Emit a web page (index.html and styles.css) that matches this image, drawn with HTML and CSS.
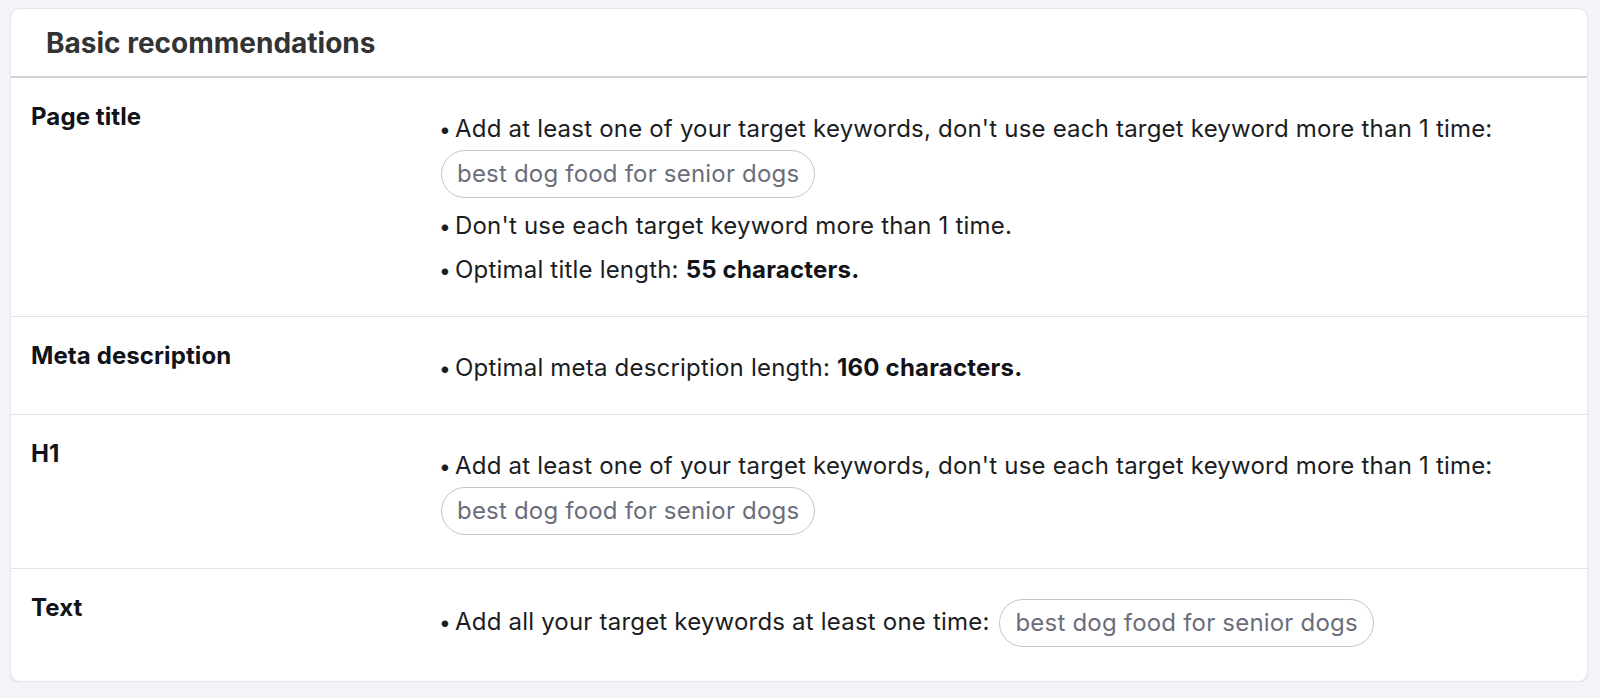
FILE: index.html
```html
<!DOCTYPE html>
<html lang="en">
<head>
  <meta charset="UTF-8">
  <meta name="viewport" content="width=device-width, initial-scale=1.0">
  <title>Basic recommendations</title>
  <link rel="stylesheet" href="styles.css">
</head>
<body>
  <section class="card">
    <h2 class="card-title">Basic recommendations</h2>

    <div class="rec-row">
      <div class="rec-label">Page title</div>
      <ul class="rec-list">
        <li>Add at least one of your target keywords, don't use each target keyword more than 1 time:
          <div class="keyword-list"><span class="keyword">best dog food for senior dogs</span></div>
        </li>
        <li>Don't use each target keyword more than 1 time.</li>
        <li>Optimal title length: <b>55 characters.</b></li>
      </ul>
    </div>

    <div class="rec-row">
      <div class="rec-label">Meta description</div>
      <ul class="rec-list">
        <li>Optimal meta description length: <b>160 characters.</b></li>
      </ul>
    </div>

    <div class="rec-row">
      <div class="rec-label">H1</div>
      <ul class="rec-list">
        <li>Add at least one of your target keywords, don't use each target keyword more than 1 time:
          <div class="keyword-list"><span class="keyword">best dog food for senior dogs</span></div>
        </li>
      </ul>
    </div>

    <div class="rec-row">
      <div class="rec-label">Text</div>
      <ul class="rec-list">
        <li>Add all your target keywords at least one time: <span class="keyword">best dog food for senior dogs</span></li>
      </ul>
    </div>
  </section>
</body>
</html>
```

FILE: styles.css
```css
body {
  margin: 8px 12px 0 10px;
  background-color: #f3f4f8;
  font-family: Inter, "Noto Sans", sans-serif;
  color: #1b1d22;
}

.card {
  background: #ffffff;
  border: 1px solid #e4e5ea;
  border-radius: 10px;
  box-shadow: 0 1px 2px rgba(20, 24, 40, 0.08);
  overflow: hidden;
}

.card-title {
  margin: 0;
  padding: 16px 35px 15px;
  font-size: 28px;
  line-height: 36px;
  font-weight: 700;
  color: #333333;
  border-bottom: 2px solid #cfd1d8;
}

.rec-row {
  display: grid;
  grid-template-columns: 408px 1fr;
  padding: 24px 20px 28px;
  border-top: 1px solid #e1e2e8;
}

.card-title + .rec-row {
  border-top: none;
}

.rec-row:last-child {
  padding-bottom: 34px;
}

.rec-label {
  font-size: 24px;
  line-height: 30px;
  font-weight: 700;
  letter-spacing: 0.1px;
  color: #111318;
}

.rec-list {
  list-style: none;
  margin: 9px 0 0;
  padding: 0;
  font-size: 24px;
  line-height: 36px;
  letter-spacing: 0.2px;
}

.rec-row:last-child .rec-list {
  margin-top: 6px;
}

.rec-list li + li {
  margin-top: 8px;
}

.rec-list li:has(.keyword-list) + li {
  margin-top: 10px;
}

.rec-list li::before {
  content: "\2022";
  display: inline-block;
  width: 16px;
  font-size: 21px;
  line-height: 1;
}

.rec-list b {
  font-weight: 700;
  color: #111318;
}

.keyword-list {
  margin: 3px 0 10px 2px;
}

.rec-list li:last-child .keyword-list {
  margin-bottom: 5px;
}

.keyword {
  display: inline-block;
  margin-left: 3px;
  padding: 5px 15px;
  border: 1px solid #c5c7cf;
  border-radius: 24px;
  color: #6b6e7a;
  line-height: 36px;
  vertical-align: middle;
}

.keyword-list .keyword {
  margin-left: 0;
}
```
